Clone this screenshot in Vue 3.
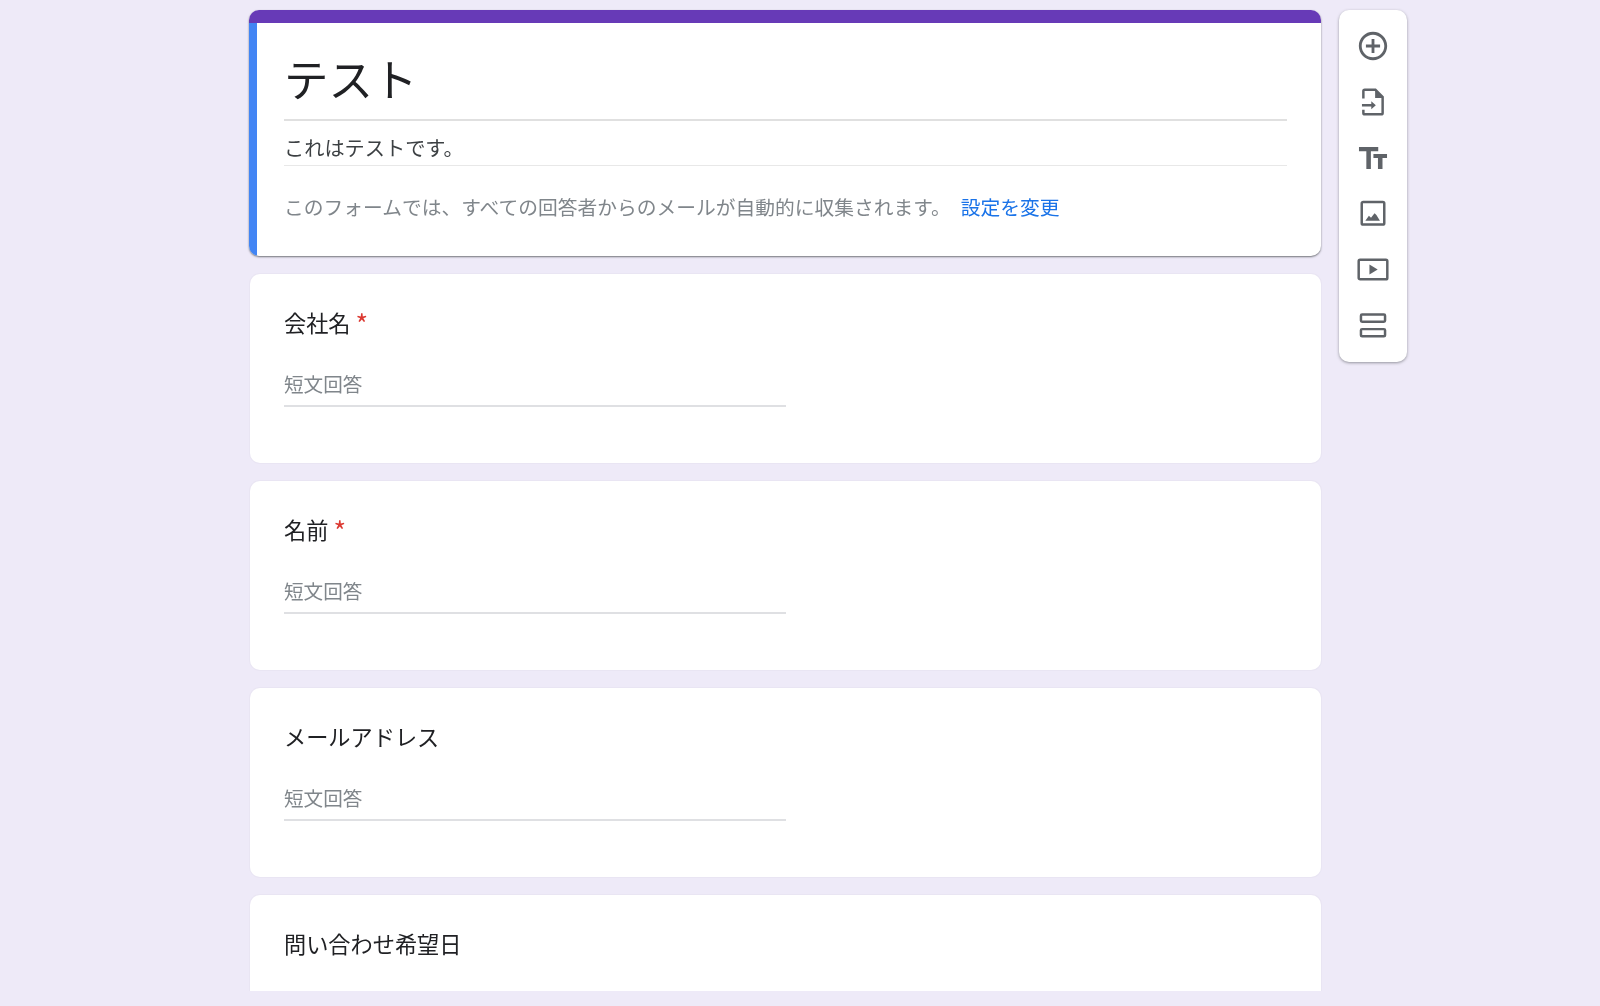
<script setup>
const questions = [
  { title: '会社名', required: true, placeholder: '短文回答' },
  { title: '名前', required: true, placeholder: '短文回答' },
  { title: 'メールアドレス', required: false, placeholder: '短文回答' }
]
</script>

<template>
  <div class="page">
    <div class="layout">
      <main class="column">
        <section class="card header">
          <div class="topbar"></div>
          <div class="header-body">
            <h1 class="title">テスト</h1>
            <p class="desc">これはテストです。</p>
            <p class="note">
              <span>このフォームでは、すべての回答者からのメールが自動的に収集されます。</span>
              <a class="link">設定を変更</a>
            </p>
          </div>
        </section>

        <section v-for="q in questions" :key="q.title" class="card question">
          <div class="q-title">
            <span>{{ q.title }}</span>
            <span v-if="q.required" class="req">*</span>
          </div>
          <div class="answer">{{ q.placeholder }}</div>
        </section>

        <section class="card question">
          <div class="q-title"><span>問い合わせ希望日</span></div>
        </section>
      </main>

      <aside class="toolbar">
        <svg class="icon" viewBox="0 0 24 24"><path d="M13 7h-2v4H7v2h4v4h2v-4h4v-2h-4V7zm-1-5C6.48 2 2 6.48 2 12s4.48 10 10 10 10-4.48 10-10S17.52 2 12 2zm0 18c-4.41 0-8-3.59-8-8s3.59-8 8-8 8 3.59 8 8-3.59 8-8 8z"/></svg>
        <svg class="icon" viewBox="0 0 24 24">
          <path class="line" d="M5.200 9.500V4.300a1 1 0 0 1 1-1h7.500l5.100 5.100v11.300a1 1 0 0 1-1 1H6.200a1 1 0 0 1-1-1v-2.200"/>
          <path d="M13.500 3.500v5.600h5.300z"/>
          <path d="M4.200 13.400h6.600v-1.900l3.200 2.800-3.200 2.800v-1.900H4.200z"/>
        </svg>
        <svg class="icon" viewBox="0 0 24 24"><path d="M2.100 4.200v3h5.200v12.600h3.200V7.200h5.200v-3H2.100zm19.800 5h-9.600v2.800h3.200v7.800h3.200V12h3.200V9.200z"/></svg>
        <svg class="icon" viewBox="0 0 24 24">
          <rect class="line" x="4.050" y="3.550" width="15.900" height="15.900" rx="1"/>
          <path d="M6.600 16.700l2.500-3.500 1.500 1.400 2.500-3.100 1.300 1.200 2.500 4z"/>
        </svg>
        <svg class="icon" viewBox="0 0 24 24">
          <rect class="line" x="1.900" y="4.800" width="20.200" height="13.800" rx="1"/>
          <path d="M9.500 8.200v7l5.800-3.500z"/>
        </svg>
        <svg class="icon" viewBox="0 0 24 24">
          <rect class="line" x="3.500" y="3.900" width="17" height="5.100" rx=".8"/>
          <rect class="line" x="3.500" y="14.200" width="17" height="5.100" rx=".8"/>
        </svg>
      </aside>
    </div>
  </div>
</template>

<style scoped>
.page {
  height: 991px;
  overflow: hidden;
  box-sizing: border-box;
  padding: 10px 0 0 250px;
  background: #eeeaf8;
  font-family: "Noto Sans CJK JP", "Noto Sans", sans-serif;
  color: #202124;
  filter: blur(0.4px);
}
.layout {
  display: flex;
  align-items: flex-start;
  gap: 18px;
}
.column {
  width: 1071px;
  display: flex;
  flex-direction: column;
  gap: 18px;
}
.card {
  background: #fff;
  border-radius: 10px;
  box-sizing: border-box;
}
.header {
  flex: none;
  height: 246px;
  margin-left: -1px;
  overflow: hidden;
  box-shadow: 0 1px 2px rgba(60, 64, 67, 0.7);
  display: flex;
  flex-direction: column;
}
.topbar {
  height: 13px;
  background: #673ab7;
  flex: none;
}
.header-body {
  flex: 1;
  border-left: 8px solid #4285f4;
  padding: 0 34px 0 27px;
}
.title {
  margin: 0;
  height: 98px;
  box-sizing: border-box;
  border-bottom: 2px solid #e0e0e0;
  padding-top: 25px;
  font-size: 44.500px;
  line-height: 60px;
  font-weight: 400;
  color: #202124;
}
.desc {
  margin: 0;
  height: 45px;
  box-sizing: border-box;
  border-bottom: 1px solid #e8e8e8;
  padding-top: 13px;
  font-size: 20.200px;
  line-height: 28px;
  color: #3c4043;
}
.note {
  margin: 27px 0 0;
  display: flex;
  gap: 10px;
  font-size: 19.750px;
  line-height: 28px;
  color: #80868b;
}
.link {
  color: #1a73e8;
}
.question {
  flex: none;
  height: 189px;
  padding: 0 34px;
  box-shadow: 0 0 0 1px #e9e5f3;
}
.q-title {
  padding-top: 32px;
  font-size: 22.200px;
  line-height: 32px;
  display: flex;
  gap: 5px;
  color: #202124;
}
.req {
  height: 32px;
  color: #dc3a32;
  font-size: 27px;
  line-height: 36px;
}
.answer {
  width: 502px;
  margin-top: 32px;
  height: 37px;
  box-sizing: border-box;
  border-bottom: 2px solid #dfe0e3;
  font-size: 19.600px;
  line-height: 28px;
  color: #80868b;
}
.toolbar {
  flex: none;
  width: 68px;
  height: 352px;
  box-sizing: border-box;
  padding: 19px 0;
  background: #fff;
  border-radius: 10px;
  box-shadow: 0 1px 3px rgba(60, 64, 67, 0.5);
  display: flex;
  flex-direction: column;
  align-items: center;
  gap: 22px;
}
.icon {
  width: 34px;
  height: 34px;
  flex: none;
  fill: #5f6368;
}
.line {
  fill: none;
  stroke: #5f6368;
  stroke-width: 1.750px;
}
</style>

<style>
html, body {
  background: #eeeaf8;
}
</style>
